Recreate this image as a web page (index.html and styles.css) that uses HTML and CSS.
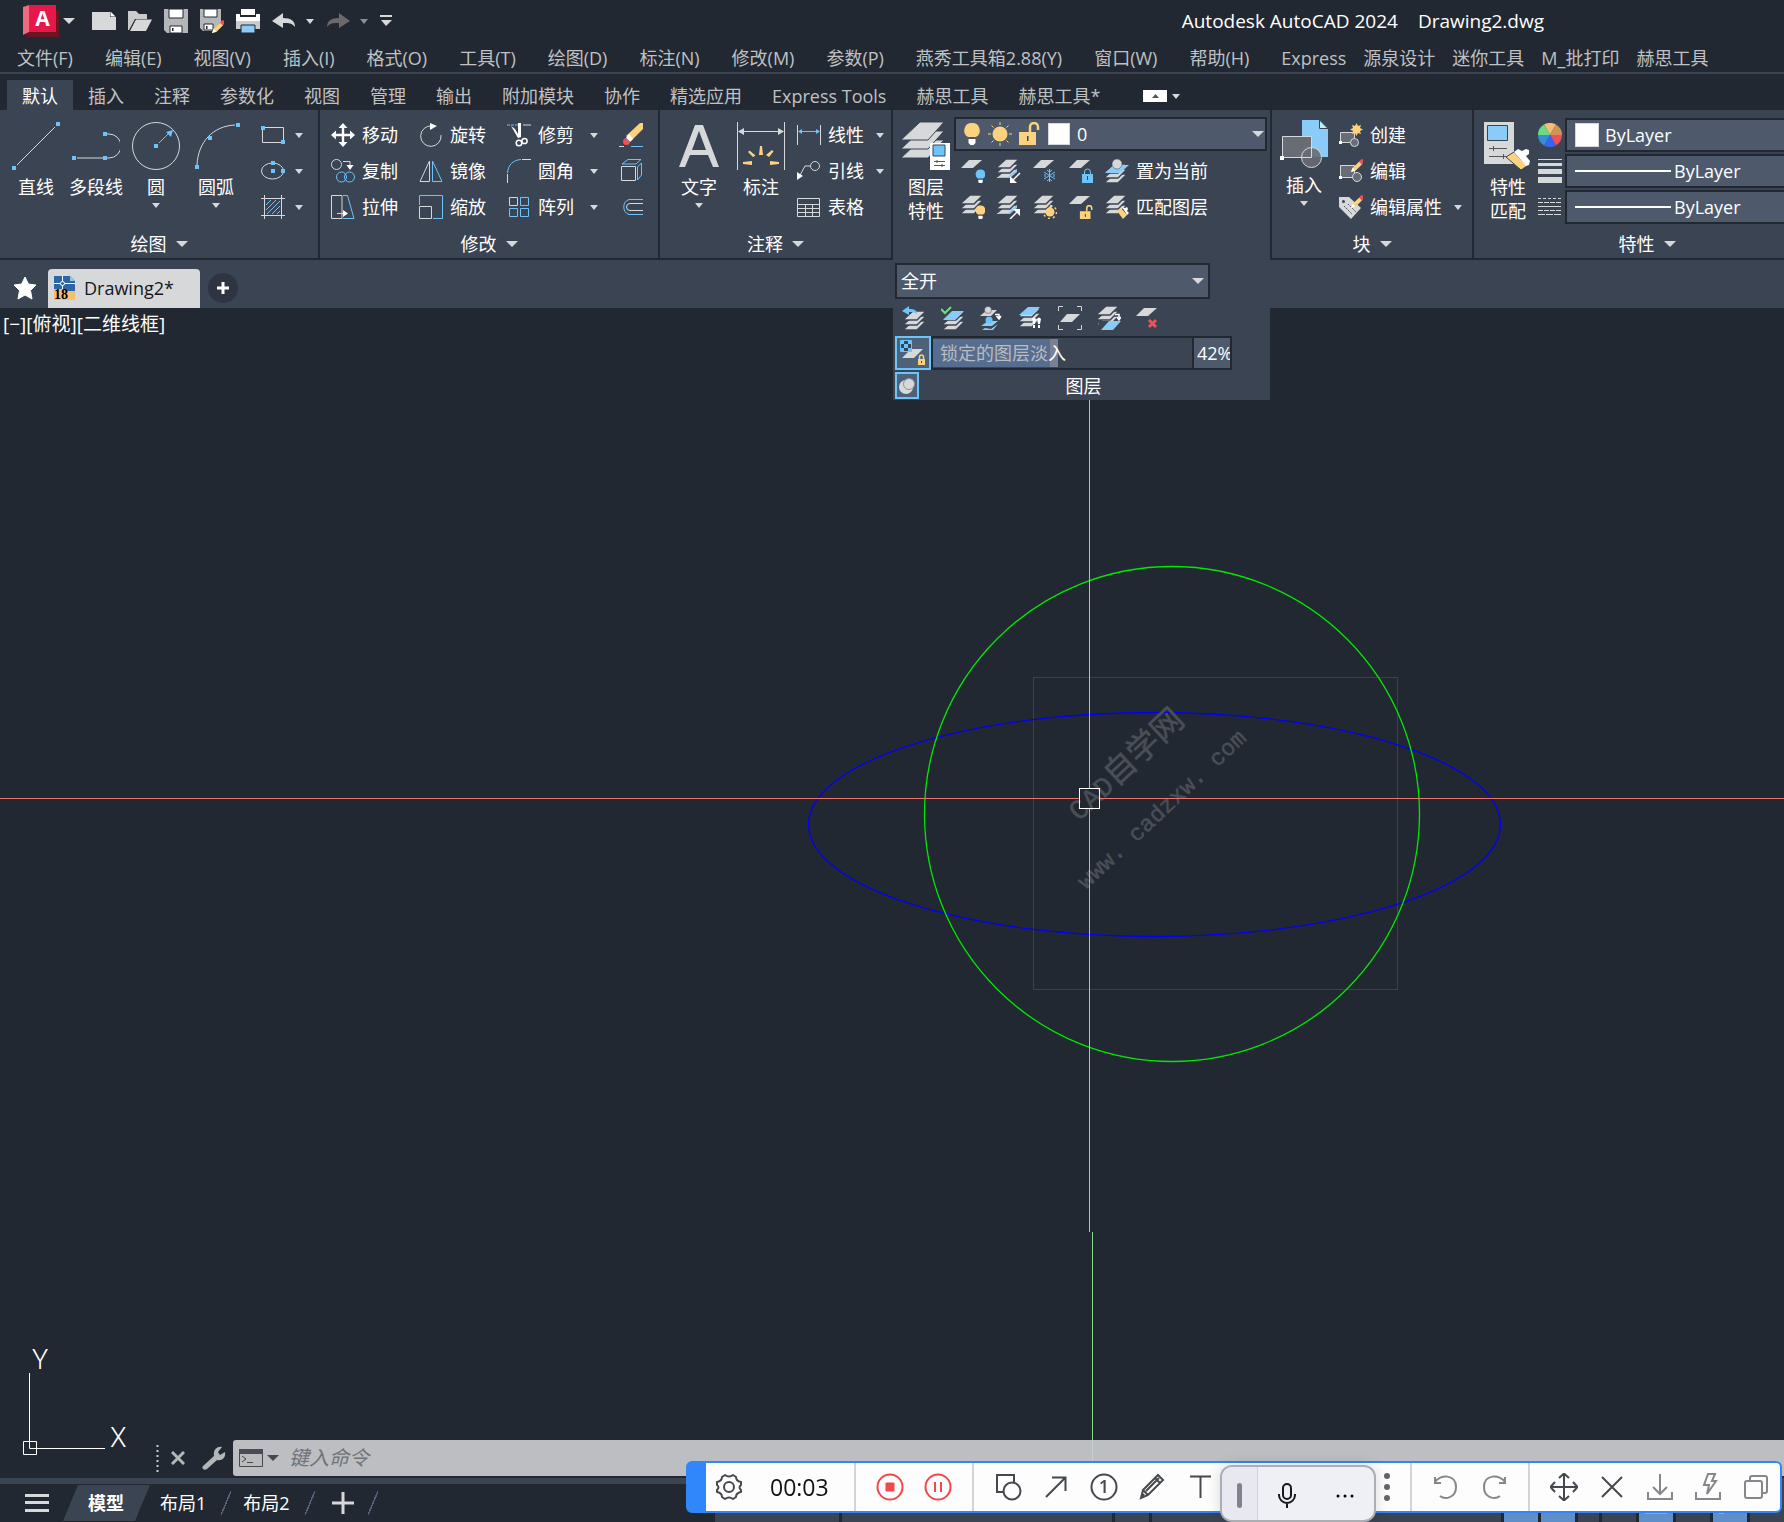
FILE: index.html
```html
<!DOCTYPE html>
<html lang="zh-CN">
<head>
  <meta charset="UTF-8">
  <title>Autodesk AutoCAD 2024 - Drawing2.dwg</title>
  <link rel="stylesheet" href="styles.css">
</head>
<body>

<!-- Shared icon shapes -->
<svg class="defs" width="0" height="0" aria-hidden="true">
  <symbol id="sheet" viewBox="0 0 24 24"><path d="M8 1h13l-9 8H0z"/></symbol>
  <symbol id="stack" viewBox="0 0 24 24">
    <g fill="#d6d8da" stroke="#3b4453" stroke-width="1.4">
      <path d="M9 10h13l-9 9H-1z"/><path d="M9 5h13l-9 9H-1z"/><path d="M9 0h13l-9 9H-1z"/>
    </g>
  </symbol>
  <symbol id="bulb" viewBox="0 0 24 24">
    <path d="M12 1a7.500 7.500 0 0 0-4 14h8a7.500 7.500 0 0 0-4-14z"/><path d="M8.500 17h7v4l-2 2h-3l-2-2z" fill="#fff"/>
  </symbol>
  <symbol id="lock" viewBox="0 0 24 24">
    <path d="M3 10h17v13H3z"/><path d="M14 10V5a4 4 0 0 1 8 0v3" fill="none" stroke="#fcd27e" stroke-width="2.500"/><path d="M11 14h1.500v5H11z" fill="#3b4453"/>
  </symbol>
  <symbol id="pencil" viewBox="0 0 12 12">
    <path d="M0 12l1.500-4L8 2l2.500 2.500L4 11z" fill="#fcd27e"/><path d="M0 12l1.500-4L4 10.500z" fill="#fff"/><path d="M7.500 2.500l1.500-2a1.800 1.800 0 0 1 2.500 2.500l-1.500 2z" fill="#f0505a"/>
  </symbol>
</svg>

<header class="titlebar">
  <button class="app-btn" aria-label="应用程序菜单">
    <svg width="36" height="32"><path d="M6 6h30v26H3z" fill="#6b1422"/><path d="M0 2l6-2v27l-6 3z" fill="#ee6a7c"/><path d="M6 0h27v27H6z" fill="#e6174b"/><text x="19.500" y="21" text-anchor="middle" class="logo-a">A</text></svg>
    <i class="caret big"></i>
  </button>
  <div class="quick">
    <button aria-label="新建"><svg width="24" height="24"><path d="M0 3h18v5h6v13H0z" fill="#d6d8da"/><path d="M18.500 2.500l5 5h-5z" fill="#fff"/></svg></button>
    <button aria-label="打开"><svg width="24" height="24"><path d="M0 2h8l3 3h8v5H7L1 21H0z" fill="#c9cbcd"/><path d="M8 10.500h16L18 22H2z" fill="#d6d8da"/></svg></button>
    <button aria-label="保存"><svg width="24" height="24"><path d="M0 0h24v24H3l-3-3z" fill="#b4b7b8"/><path d="M5 0h14v9H5zM6 17h12v7H6z" fill="#fff" stroke="#222831"/><path d="M8 19h1.500v3H8z" fill="#222831"/></svg></button>
    <button aria-label="另存为"><svg width="24" height="24"><path d="M0 0h21v13L12 22H3l-3-3z" fill="#b4b7b8"/><path d="M4 0h13v8H4zM4 15h9v6H4z" fill="#fff" stroke="#222831"/><path d="M6 17h1.500v3H6z" fill="#222831"/><use href="#pencil" x="12" y="11" width="13" height="13"/></svg></button>
    <button aria-label="打印"><svg width="24" height="24"><path d="M5 0h14v6H5z" fill="#fff"/><path d="M0 5h4v3h16V5h4v7H0z" fill="#fff"/><path d="M0 12h24v8H0z" fill="#c9cbcd"/><path d="M5 16h14v8H5z" fill="#8acbf7" stroke="#222831"/></svg></button>
    <button aria-label="放弃"><svg width="24" height="24"><path d="M0 12l11-8v5c8 0 12 3 12 9-3-4-6-4-12-4v5z" fill="#d6d8da"/></svg><i class="caret"></i></button>
    <button class="dim" aria-label="重做"><svg width="24" height="24"><path d="M24 12L13 4v5C5 9 1 12 1 18c3-4 6-4 12-4v5z" fill="#6d686b"/></svg><i class="caret"></i></button>
    <button aria-label="自定义"><svg width="12" height="12"><path d="M0 0h12v2H0zM1 5h11L6 11z" fill="#d6d8da"/></svg></button>
  </div>
  <div class="doc-title"><span>Autodesk AutoCAD 2024</span><span>Drawing2.dwg</span></div>
</header>

<nav class="menubar">
  <a href="#">文件(F)</a><a href="#">编辑(E)</a><a href="#">视图(V)</a><a href="#">插入(I)</a><a href="#">格式(O)</a><a href="#">工具(T)</a><a href="#">绘图(D)</a><a href="#">标注(N)</a><a href="#">修改(M)</a><a href="#">参数(P)</a><a href="#">燕秀工具箱2.88(Y)</a><a href="#">窗口(W)</a><a href="#">帮助(H)</a>
  <div class="plugins"><a href="#">Express</a><a href="#">源泉设计</a><a href="#">迷你工具</a><a href="#">M_批打印</a><a href="#">赫思工具</a></div>
</nav>

<nav class="ribbon-tabs">
  <a href="#" class="active">默认</a><a href="#">插入</a><a href="#">注释</a><a href="#">参数化</a><a href="#">视图</a><a href="#">管理</a><a href="#">输出</a><a href="#">附加模块</a><a href="#">协作</a><a href="#">精选应用</a><a href="#">Express Tools</a><a href="#">赫思工具</a><a href="#">赫思工具*</a>
  <button class="collapse" aria-label="最小化功能区"><svg width="24" height="12"><path d="M0 0h24v12H0z" fill="#fff"/><path d="M9 8h7l-3.500-4z" fill="#555"/></svg><i class="caret"></i></button>
</nav>

<div class="ribbon">
  <!-- Draw -->
  <section class="panel draw">
    <div class="tools">
      <button class="large"><svg width="48" height="48"><path d="M5 43L43 5" class="ln"/><path d="M0 44h4v4H0zM44 0h4v4h-4z" class="bl"/></svg><span>直线</span></button>
      <button class="large"><svg width="48" height="48"><path d="M5 36h27M33 12h4a12 12 0 0 1 0 24h-4" class="ln"/><path d="M0 34h4v4H0zM31 34h4v4h-4zM31 10h4v4h-4z" class="bl"/></svg><span>多段线</span></button>
      <button class="large"><svg width="48" height="48"><circle cx="24" cy="24" r="23.500" class="ln"/><path d="M27 21l9-9" class="lb"/><path d="M22 22h4v4h-4zM41 8l-2 7-5-5z" class="bl"/></svg><span>圆</span><i class="caret"></i></button>
      <button class="large"><svg width="48" height="48"><path d="M5 43C6 20 21 4 43 3" class="ln"/><path d="M3 43h4v4H3zM16 14h4v4h-4zM44 1h4v4h-4z" class="bl"/></svg><span>圆弧</span><i class="caret"></i></button>
      <div class="mini">
        <button aria-label="矩形"><svg width="24" height="24"><path d="M1.500 4.500h21v15h-21z" class="ln"/><path d="M0 3h4v4H0zM20 17h4v4h-4z" class="bl"/></svg><i class="caret"></i></button>
        <button aria-label="椭圆"><svg width="24" height="24"><ellipse cx="11.500" cy="12" rx="11" ry="8" class="ln"/><path d="M10 2h4v4h-4zM10 10h4v4h-4zM20 10h4v4h-4z" class="bl"/></svg><i class="caret"></i></button>
        <button aria-label="图案填充"><svg width="24" height="24"><path d="M0 3.500h24M0 20.500h24M3.500 0v24M20.500 0v24" class="ln"/><path d="M5 10l5-5M5 15L15 5M6 19L19 6M11 19l8-8M16 19l3-3" class="lb"/></svg><i class="caret"></i></button>
      </div>
    </div>
    <button class="panel-title">绘图<i class="caret big"></i></button>
  </section>

  <!-- Modify -->
  <section class="panel modify">
    <div class="tools">
      <div class="grid">
        <button><svg width="24" height="24"><path d="M12 0l4.500 5h-3.300v5.800H19V7.500l5 4.500-5 4.500v-3.300h-5.800V19h3.300L12 24l-4.500-5h3.300v-5.800H5v3.300L0 12l5-4.500v3.300h5.800V5H7.500z" fill="#fff"/></svg>移动</button>
        <button><svg width="24" height="24"><path d="M13 3a10.200 10.200 0 1 0 9 9" class="ln"/><path d="M11 0l7 3-7 4z" fill="#fff"/></svg>旋转</button>
        <button><svg width="24" height="24"><path d="M0 2h11" class="lb" stroke-dasharray="3 1"/><path d="M16 2h8" class="ln"/><path d="M4 3l4 3 3 5V0h3v14l-3 1z" fill="#fff"/><circle cx="12" cy="20" r="2.800" class="th"/><circle cx="17.500" cy="18" r="2.600" class="th"/></svg>修剪<i class="caret"></i></button>
        <button aria-label="删除"><svg width="24" height="24"><path d="M24 0v6L12 18l-5-5L21 0z" fill="#fcd27e"/><path d="M10 11l4 5-3 3-4-4z" fill="#fff"/><path d="M7 15l4 4a3.500 3.500 0 1 1-4-4z" fill="#f0505a"/><path d="M0 23.500h5" class="ln"/><path d="M12 23.500h12" class="lb"/></svg></button>
        <button><svg width="24" height="24"><circle cx="5.500" cy="5.500" r="5" class="ln"/><path d="M12 2.500h7V7" class="ln"/><path d="M15.500 6h7L19 11z" fill="#fff"/><circle cx="10.500" cy="18" r="5" class="lb"/><circle cx="18.500" cy="18" r="5" class="lb"/></svg>复制</button>
        <button><svg width="24" height="24"><path d="M10.500 2v20.500H1z" class="ln"/><path d="M13.500 2v20.500H23z" class="lb"/></svg>镜像</button>
        <button><svg width="24" height="24"><path d="M.5 15v9M15 .5h9" class="ln"/><path d="M.5 14C1 6 6 1 14 .5" class="lb"/></svg>圆角<i class="caret"></i></button>
        <button aria-label="分解"><svg width="24" height="24"><path d="M2.500 7.500h14v14h-14z" class="ln"/><path d="M3 5l6-4.500h13L17 5zM18.500 8l4-4v12l-4 5z" class="lb"/></svg></button>
        <button><svg width="24" height="24"><path d="M11 .5H.5v23H11V.5M6 18.500h8" class="ln"/><path d="M12 15l5 3.500-5 3.500z" fill="#fff"/><path d="M12 .5h4.500l6.500 23H12" class="lb"/></svg>拉伸</button>
        <button><svg width="24" height="24"><path d="M.5 11.500h12v12H.5z" class="ln"/><path d="M.5 10V.5h23v23H14" class="lb"/></svg>缩放</button>
        <button><svg width="24" height="24"><path d="M2.500 2.500h8v8h-8z" class="ln"/><path d="M13.500 2.500h8v8h-8zM2.500 13.500h8v8h-8zM13.500 13.500h8v8h-8z" class="lb"/></svg>阵列<i class="caret"></i></button>
        <button aria-label="偏移"><svg width="24" height="24"><path d="M24 4.500H10a8 8 0 0 0 0 15h14" class="lb"/><path d="M24 8.500H11a3.500 3.500 0 0 0 0 7h13" class="ln"/></svg></button>
      </div>
    </div>
    <button class="panel-title">修改<i class="caret big"></i></button>
  </section>

  <!-- Annotation -->
  <section class="panel annotate">
    <div class="tools">
      <button class="large"><svg width="48" height="48"><path d="M4 45L20 3h8l16 42h-6l-5-12H15l-5 12zM17 28h14L24 9z" fill="#d6d8da" fill-rule="evenodd"/></svg><span>文字</span><i class="caret"></i></button>
      <button class="large"><svg width="48" height="48"><path d="M.5 0v48M47.500 0v48M4 9.500h40" class="ln"/><path d="M1 9.500L7 6v7zM47 9.500L41 6v7z" fill="#d6d8da"/><path d="M22 33l1-9h2l1 9zM16 35l-5-5 1.500-1.500 6 5zM32 35l-3-2 6-5 1.500 1.500zM15 39v4l-9-1v-2zM33 39v4l9-1v-2z" fill="#fcd27e"/></svg><span>标注</span></button>
      <div class="mini">
        <button><svg width="24" height="24"><path d="M.5 2v20M23.500 2v20" class="ln"/><path d="M3 8.500h18" class="lb"/><path d="M1 8.500L5 6v5zM23 8.500L19 6v5z" class="bl"/></svg>线性<i class="caret"></i></button>
        <button><svg width="24" height="24"><circle cx="18" cy="7" r="4.500" class="ln"/><path d="M13 7H8L2 18" class="ln"/><path d="M0 21v-8l6 4z" fill="#fff"/></svg>引线<i class="caret"></i></button>
        <button><svg width="24" height="24"><path d="M.5 3.500h22v18H.5zM1 9.500h21M1 13.500h21M1 17.500h21M8.500 10v12M15.500 10v12" class="ln"/></svg>表格</button>
      </div>
    </div>
    <button class="panel-title">注释<i class="caret big"></i></button>
  </section>

  <!-- Layers -->
  <section class="panel layers">
    <div class="tools">
      <button class="large"><svg width="48" height="48"><g fill="#d6d8da" stroke="#3b4453"><path d="M18 18h24L26 36H-1z"/><path d="M18 9h24L26 27H-1z"/><path d="M18 0h24L26 18H-1z"/></g><path d="M28 21h20v27H28z" fill="#fff"/><path d="M31 23h12v11H31z" fill="#6cc4fb" stroke="#3b4453"/><path d="M32 39.500h11M32 43.500h11M35 38v3M40 42v3" stroke="#555"/></svg><span>图层<br>特性</span></button>
      <div class="layer-tools">
        <label class="combo layer-combo">
          <svg width="24" height="24" fill="#fcd27e"><use href="#bulb"/></svg>
          <svg width="24" height="24"><circle cx="12" cy="12" r="7.500" fill="#fcd27e"/><path d="M12 0v3M12 21v3M0 12h3M21 12h3M3.500 3.500l2 2M18.500 18.500l2 2M3.500 20.500l2-2M18.500 5.500l2-2" stroke="#fcd27e"/></svg>
          <svg width="24" height="24" fill="#fcd27e"><use href="#lock"/></svg>
          <i class="swatch"></i>
          <select aria-label="图层"><option>0</option></select><i class="caret big"></i>
        </label>
        <div class="icon-row">
          <button aria-label="关闭图层"><svg width="24" height="24"><use href="#sheet" fill="#d6d8da"/><use href="#bulb" x="12" y="10" width="15" height="15" fill="#6cc4fb"/></svg></button>
          <button aria-label="隔离"><svg width="24" height="24"><use href="#stack"/><path d="M0 18h11l9-8v3l-7 6H0z" fill="#8acbf7"/><path d="M23 14l-7 7" stroke="#fff" stroke-width="1.500"/><path d="M13 24v-7l7 7z" fill="#fff"/></svg></button>
          <button aria-label="冻结"><svg width="24" height="24"><use href="#sheet" fill="#d6d8da"/><path d="M16.500 10v13M11 13l11 7M11 20l11-7M14 11l2.500 2 2.500-2M14 22l2.500-2 2.500 2M12 15v3M21 15v3" class="lb"/></svg></button>
          <button aria-label="锁定"><svg width="24" height="24"><use href="#sheet" fill="#d6d8da"/><path d="M13 15h11v9H13z" class="bl"/><path d="M15.500 15v-2a3 3 0 0 1 6 0v2" class="lb"/><path d="M18 17h1v4h-1z" fill="#3b4453"/></svg></button>
          <button><svg width="24" height="24"><use href="#stack" y="5"/><path d="M9 6h15l-9 8H0z" fill="#8acbf7"/><circle cx="12" cy="5" r="5" fill="#d6d8da" stroke="#3b4453" stroke-width=".5"/></svg>置为当前</button>
        </div>
        <div class="icon-row">
          <button aria-label="打开所有图层"><svg width="24" height="24"><use href="#stack"/><use href="#bulb" x="12" y="10" width="15" height="15" fill="#fcd27e"/></svg></button>
          <button aria-label="取消隔离"><svg width="24" height="24"><use href="#stack"/><path d="M0 18h11l9-8v3l-7 6H0z" fill="#8acbf7"/><path d="M13 24l7-7" stroke="#fff" stroke-width="1.500"/><path d="M16 14h7v7z" fill="#fff"/></svg></button>
          <button aria-label="解冻"><svg width="24" height="24"><use href="#stack"/><circle cx="17" cy="17" r="4.500" fill="#fcd27e"/><circle cx="17" cy="17" r="6.500" fill="none" stroke="#fcd27e" stroke-width="1.500" stroke-dasharray="2 3"/></svg></button>
          <button aria-label="解锁"><svg width="24" height="24"><use href="#sheet" fill="#d6d8da"/><use href="#lock" x="9" y="10" width="15" height="15" fill="#fcd27e"/></svg></button>
          <button><svg width="24" height="24"><use href="#stack"/><path d="M12 16l4-3 6 7-4 4z" fill="#fcd27e"/><path d="M17 12l3 1 2-1 1 2-1 2 2 2-2 2z" fill="#fff"/></svg>匹配图层</button>
        </div>
      </div>
    </div>

    <!-- Expanded part of the panel, lies over the drawing -->
    <div class="flyout">
      <label class="combo state-combo"><select aria-label="图层状态"><option>全开</option></select><i class="caret big"></i></label>
      <div class="state-row">
        <button aria-label="上一个"><svg width="24" height="24"><use href="#stack" x="2" y="5"/><path d="M0 5l7-5v3c5 0 8 1 8 5-3-2-5-2-8-2v3z" class="bl"/></svg></button>
        <button aria-label="漫游"><svg width="24" height="24"><use href="#stack" x="2" y="5"/><path d="M11 5h12l-9 9H2z" fill="#8acbf7"/><path d="M0 3l4 4 6-6" fill="none" stroke="#6be07b" stroke-width="2"/></svg></button>
        <button aria-label="更改到当前图层"><svg width="24" height="24"><path d="M7 4h10l-6 6H0z" fill="#d6d8da"/><circle cx="8" cy="4" r="3.500" fill="#d6d8da" stroke="#3b4453" stroke-width=".5"/><path d="M8 15h10l-6 5H1zM5 22l6 1 7-5-5 6H2z" fill="#8acbf7"/><circle cx="9" cy="14" r="3.500" class="bl"/><path d="M15 8.500h4V13M16.500 10l2.500 3 2-3" class="th"/></svg></button>
        <button aria-label="图层浏览"><svg width="24" height="24"><use href="#stack" y="2"/><path d="M9 1h12l-8 8H0z" fill="#8acbf7"/><path d="M13 13q2-3 4 0l-1 5h-2zM18 13q2-3 4 0l-1 5h-2zM14 19h2v3h-2zM19 19h2v3h-2z" fill="#fff"/></svg></button>
        <button aria-label="视口冻结"><svg width="24" height="24"><path d="M9 8h13l-8 8H2z" fill="#d6d8da"/><path d="M.5 5V.5H5M19 .5h4.500V5M.5 19v4.500H5M19 23.500h4.500V19" class="ln"/></svg></button>
        <button aria-label="合并"><svg width="24" height="24"><use href="#stack" y="0"/><path d="M2 15h22v9H2z" fill="#3b4453"/><path d="M12 15h12l-8 9H4z" fill="#8acbf7"/><path d="M18 8.500h4V13M20 11l2 3 2-3" class="th"/></svg></button>
        <button aria-label="删除图层"><svg width="24" height="24"><use href="#sheet" y="1" fill="#d6d8da"/><path d="M13 14l7 7M20 14l-7 7" stroke="#f0505a" stroke-width="3"/></svg></button>
      </div>
      <div class="fade-row">
        <button class="toggle" aria-label="锁定的图层淡入"><svg width="26" height="26"><path d="M11 9h12l-9 9H2z" fill="#d6d8da"/><path d="M.5.5h11v11H.5z" fill="#3b4453" stroke="#6cc4fb"/><path d="M1 1h3v3H1zM8 1h3v3H8zM4 4h4v4H4zM1 8h3v3H1zM8 8h3v3H8z" class="bl"/><path d="M18 19h7v6h-7z" fill="#fcd27e"/><path d="M19.500 19v-2a2 2 0 0 1 4 0v2" fill="none" stroke="#fcd27e" stroke-width="1.500"/><path d="M21 21h1v2h-1z" fill="#3b4453"/></svg></button>
        <div class="fade-slider"><input id="fade" type="range" min="0" max="90" value="42"><label for="fade">锁定的图层淡<b>入</b></label></div>
        <input class="fade-value" type="text" value="42%" aria-label="淡入百分比">
      </div>
      <div class="flyout-foot">
        <button class="toggle pin" aria-label="固定"><svg width="16" height="18"><circle cx="7" cy="10" r="7" fill="#d6d8da"/><circle cx="10" cy="7" r="5.500" fill="#d6d8da" stroke="#8b929c"/></svg></button>
        <span>图层</span>
      </div>
    </div>
  </section>

  <!-- Block -->
  <section class="panel block">
    <div class="tools">
      <button class="large"><svg width="48" height="48"><path d="M22 0h17l9 9v28H22z" fill="#8acbf7"/><path d="M39.500 0v8.500H48z" fill="#b9f0f0" stroke="#3b4453"/><path d="M2.500 16.500h29v21h-29z" fill="#696c74" stroke="#d6d8da"/><circle cx="31.500" cy="37.500" r="10" fill="#696c74" fill-opacity=".9" stroke="#d6d8da"/><path d="M21 37.500h10.500V27" class="ln"/><path d="M0 36h4v4H0z" fill="#fff"/></svg><span>插入</span><i class="caret"></i></button>
      <div class="mini">
        <button><svg width="24" height="24"><path d="M1.500 9.500h14v10h-14z" fill="#696c74" stroke="#d6d8da"/><circle cx="15.500" cy="19.500" r="4" fill="#696c74" stroke="#d6d8da"/><path d="M0 18h3v3H0z" fill="#fff"/><path d="M17.500 0l1.500 3 3-1-1 3 3 1.500-3 1.500 1 3-3-1-1.500 3-1.500-3-3 1 1-3-3-1.500 3-1.500-1-3 3 1z" fill="#fcd27e"/></svg>创建</button>
        <button><svg width="24" height="24"><path d="M1.500 6.500h14v12h-14z" fill="#696c74" stroke="#d6d8da"/><circle cx="18" cy="18" r="4.500" fill="#696c74" stroke="#d6d8da"/><path d="M0 17h3v3H0z" fill="#fff"/><use href="#pencil" x="12" y="0" width="13" height="13"/></svg>编辑</button>
        <button><svg width="24" height="24"><path d="M0 2h10l12 11-10 11L0 12z" fill="#d6d8da"/><path d="M5 11l8 8M9 9l8 8" stroke="#555" stroke-dasharray="2 1"/><circle cx="4.500" cy="6.500" r="1.500" fill="#3b4453"/><use href="#pencil" x="12" y="0" width="13" height="13"/></svg>编辑属性<i class="caret"></i></button>
      </div>
    </div>
    <button class="panel-title">块<i class="caret big"></i></button>
  </section>

  <!-- Properties -->
  <section class="panel props">
    <div class="tools">
      <button class="large"><svg width="48" height="48"><path d="M0 0h30v42H0z" fill="#d6d8da"/><path d="M3.500 3.500h20v15h-20z" fill="#8acbf7" stroke="#3b4453"/><path d="M5 26.500h18M5 34.500h18M9.500 24v5M19.500 32v5" stroke="#555"/><path d="M22 35l8-5 13 14-6 4z" fill="#fcd27e" stroke="#3b4453"/><path d="M30 30l4-3 4 2 4-2 3 1v4l-3 2 4 5-1 4-3 1z" fill="#fff"/></svg><span>特性<br>匹配</span></button>
      <div class="prop-rows">
        <div class="prop"><svg width="24" height="24"><g transform="translate(12 12)"><path d="M0 0L-6 -10.400A12 12 0 0 1 6 -10.400z" fill="#f5bd75"/><path d="M0 0L6 -10.400A12 12 0 0 1 12 0z" fill="#d2925a"/><path d="M0 0H12A12 12 0 0 1 6 10.400z" fill="#f0505a"/><path d="M0 0L6 10.400A12 12 0 0 1 -6 10.400z" fill="#3a64ee"/><path d="M0 0L-6 10.400A12 12 0 0 1 -12 0z" fill="#3590dc"/><path d="M0 0H-12A12 12 0 0 1 -6 -10.400z" fill="#6bdc82"/></g></svg>
          <label class="combo"><i class="swatch"></i><select aria-label="颜色"><option>ByLayer</option></select></label></div>
        <div class="prop"><svg width="24" height="24"><path d="M0 0h24v1H0zM0 4h24v3H0zM0 10h24v5H0zM0 18h24v6H0z" fill="#d6d8da"/></svg>
          <label class="combo"><i class="rule"></i><select aria-label="线宽"><option>ByLayer</option></select></label></div>
        <div class="prop"><svg width="24" height="24"><path d="M0 3.500h23" class="ln" stroke-dasharray="3 2"/><path d="M0 7.500h23M0 15.500h23" class="ln" stroke-dasharray="5 1"/><path d="M0 11.500h23" class="ln"/><path d="M0 19.500h23" class="ln" stroke-dasharray="7 1"/></svg>
          <label class="combo"><i class="rule"></i><select aria-label="线型"><option>ByLayer</option></select></label></div>
      </div>
    </div>
    <button class="panel-title">特性<i class="caret big"></i></button>
  </section>
</div>

<div class="file-tabs">
  <button aria-label="开始"><svg width="24" height="24"><path d="M12 1l3.400 7 7.600 1-5.500 5.500L19 23l-7-4-7 4 1.500-8.500L1 9l7.600-1z" fill="#fff" stroke="#fff" stroke-linejoin="round"/></svg></button>
  <a href="#" class="file-tab"><svg width="22" height="24"><path d="M0 0h16l5 5v19H0z" fill="#2c66a8"/><path d="M16 0l5 5h-5z" fill="#9cc7d0"/><path d="M0 13h8l5 2h8v9H0z" fill="#f6bf70"/><path d="M0 7.500h21M8.500 0v13" stroke="#fff"/><circle cx="8.500" cy="7.500" r="2" fill="#2c66a8" stroke="#fff"/><text x="0" y="23" class="badge">18</text></svg>Drawing2*</a>
  <button class="new-tab" aria-label="新图形"><svg width="12" height="12"><path d="M6 0v12M0 6h12" stroke="#fff" stroke-width="3"/></svg></button>
</div>

<main class="canvas">
  <div class="view-label">[−][俯视][二维线框]</div>
  <svg class="drawing">
    <rect x="1033.500" y="369.500" width="364" height="312" stroke="#cc0408"/>
    <ellipse cx="1154.500" cy="516.500" rx="346" ry="112" stroke="#0000f8" stroke-width="1.300"/>
    <circle cx="1172" cy="506" r="247.500" stroke="#00e800" stroke-width="1.300"/>
    <g class="watermark">
      <text transform="translate(1079 514) rotate(-43)"><tspan class="wm-latin">CAD</tspan>自学网</text>
      <text transform="translate(1086 582) rotate(-43)" class="wm-url">www. cadzxw. com</text>
    </g>
    <path d="M0 490.500h1079M1100 490.500h3000" stroke="#ec7468"/>
    <path d="M1089.500 92v388M1089.500 501v423M1092.500 924v236" stroke="#86de8a"/>
    <rect x="1079.500" y="480.500" width="20" height="20" stroke="#fff"/>
    <g stroke="#fff"><path d="M29.500 1065v75.500H105M23.500 1133.500h13v13h-13z"/></g>
    <text x="32" y="1061" class="ucs">Y</text><text x="110" y="1139" class="ucs">X</text>
  </svg>
  <div class="command">
    <div class="command-tools">
      <svg width="3" height="27"><path d="M1.500 0v27" stroke="#c9cbcd" stroke-width="2" stroke-dasharray="2 3"/></svg>
      <button aria-label="关闭"><svg width="14" height="14"><path d="M1 1l12 12M13 1L1 13" stroke="#b4b7b8" stroke-width="3"/></svg></button>
      <button aria-label="自定义"><svg width="24" height="24"><path d="M1 20L12 10C11 4 15 0 20 1l-4 5 2 3 5-3c1 6-3 9-8 8L5 23c-3 2-6-1-4-3z" fill="#b4b7b8"/></svg></button>
    </div>
    <div class="command-line">
      <svg width="24" height="18"><path d="M.5.5h23v17H.5z" fill="#b8bcbc" stroke="#4a474c"/><path d="M0 0h24v5H0z" fill="#4a4b58"/><path d="M3 7l4 3-4 3M8 13.500h6" fill="none" stroke="#4a474c"/></svg>
      <i class="caret big dark"></i>
      <input type="text" placeholder="键入命令" aria-label="命令行">
    </div>
  </div>
</main>

<footer class="status">
  <button class="burger" aria-label="布局菜单"><svg width="24" height="18"><path d="M0 0h24v3H0zM0 7h24v3H0zM0 15h24v3H0z" fill="#d6d8da"/></svg></button>
  <a href="#" class="layout active">模型</a>
  <a href="#" class="layout">布局1</a><i class="slash"></i>
  <a href="#" class="layout">布局2</a><i class="slash"></i>
  <button class="add" aria-label="新建布局"><svg width="22" height="22"><path d="M11 0v22M0 11h22" stroke="#d6d8da" stroke-width="3"/></svg></button><i class="slash"></i>
  <div class="status-cells">
    <i class="coords"></i>
    <i class="space"></i>
    <i><svg width="26" height="24"><path d="M0 19.500h8M12 19.500h14M5 4v14" class="th"/></svg></i>
    <i class="modes"><svg width="26" height="24"><path d="M6.500 2v20M12.500 2v20M18.500 2v20" class="th"/></svg></i>
    <i class="on"><svg width="26" height="24"><path d="M2 19.500h22L14 4" class="th"/></svg></i>
    <i class="on"><svg width="26" height="24"><path d="M3.500 3.500h19v17h-19z" class="th"/></svg></i>
    <i class="narrow"></i>
    <i><svg width="26" height="24"><path d="M7 6h12v12H7z" fill="#d6d8da"/></svg></i>
    <i class="on"><svg width="26" height="24"><path d="M2.500 4.500h21v17h-21z" class="th"/><path d="M8 14h4v5H8zM15 14h4v5h-4z" fill="#fff"/></svg></i>
    <i><svg width="26" height="24"><path d="M11 8h14v14H11z" fill="#6bdc82"/></svg></i>
    <i class="on"><svg width="26" height="24"><path d="M2.500 4.500h4v17h-4zM8 19h11v-8" class="th"/></svg></i>
    <i></i>
  </div>
</footer>

<!-- Screen recorder bar -->
<div class="recorder">
  <div class="handle"></div>
  <div class="rec-group first">
    <button aria-label="设置"><svg width="28" height="28" class="dk"><path d="M10 2q4 3 8 0l3 2q0 4 5 5v3q-3 2 0 5v2q-5 1-5 5l-3 2q-4-3-8 0l-3-2q0-4-5-5v-2q3-3 0-5V9q5-1 5-5z" stroke-linejoin="round"/><circle cx="14" cy="14" r="5"/></svg></button>
    <time>00:03</time>
  </div>
  <div class="rec-group">
    <button aria-label="停止"><svg width="28" height="28"><circle cx="14" cy="14" r="12.500" class="rd"/><rect x="9.500" y="9.500" width="9" height="9" rx="1" fill="#f2474b"/></svg></button>
    <button aria-label="暂停"><svg width="28" height="28"><circle cx="14" cy="14" r="12.500" class="rd"/><path d="M11 9v10M17 9v10" class="rd"/></svg></button>
  </div>
  <div class="rec-group wide">
    <button aria-label="形状"><svg width="28" height="28" class="dk"><path d="M10 19H3V2h17v7"/><circle cx="18" cy="18" r="8.500"/></svg></button>
    <button aria-label="箭头"><svg width="28" height="28" class="dk"><path d="M4 24L23 5M10 4.500h13.500V18"/></svg></button>
    <button aria-label="序号"><svg width="28" height="28" class="dk"><circle cx="14" cy="14" r="12.500"/><text x="14" y="20" text-anchor="middle" class="num">1</text></svg></button>
    <button aria-label="画笔"><svg width="28" height="28" class="dk"><path d="M3 25l2-8L20 2l5 5-15 15zM5 17l5 5M8 18L21 5M17 5l5 5M3 25l3-4"/></svg></button>
    <button aria-label="文本"><svg width="28" height="28" class="dk"><path d="M4 3.500h21M14.500 3v22"/></svg></button>
    <button class="more" aria-label="更多"><svg width="6" height="30"><g fill="#63656b"><circle cx="3" cy="4" r="3"/><circle cx="3" cy="15" r="3"/><circle cx="3" cy="26" r="3"/></g></svg></button>
  </div>
  <div class="rec-group">
    <button aria-label="撤销"><svg width="28" height="28" class="gy"><path d="M3 4v6h6M3 9c5-8 21-8 21 5 0 11-11 13-16 9"/></svg></button>
    <button aria-label="恢复"><svg width="28" height="28" class="gy"><path d="M25 4v6h-6M25 9C20 1 4 1 4 14c0 11 11 13 16 9"/></svg></button>
  </div>
  <div class="rec-group last">
    <button aria-label="移动"><svg width="28" height="28" class="dk"><path d="M14 1v26M1 14h26M9 5l5-4.500L19 5M9 23l5 4.500 5-4.500M5 9L.5 14 5 19M23 9l4.500 5-4.500 5"/></svg></button>
    <button aria-label="关闭"><svg width="28" height="28" class="dk"><path d="M4 4l20 20M24 4L4 24"/></svg></button>
    <button aria-label="下载"><svg width="28" height="28" class="gy"><path d="M14 1v20M7 14l7 7 7-7M2 19v7h24v-7"/></svg></button>
    <button aria-label="快速保存"><svg width="28" height="28" class="gy"><path d="M14 1h7l-3 7h4L13 21l2-9h-5zM2 19v7h24v-7"/></svg></button>
    <button aria-label="复制"><svg width="28" height="28" class="gy"><rect x="3" y="8" width="17" height="17" rx="2"/><path d="M8 8V5q0-2 2-2h13q2 0 2 2v13q0 2-2 2h-3"/></svg></button>
  </div>
  <div class="voice">
    <div class="grip"><i></i></div>
    <button aria-label="语音"><svg width="18" height="26" class="bk"><rect x="5" y="1" width="8" height="15" rx="4"/><path d="M1 11v1a8 8 0 0 0 16 0v-1M9 20v5"/></svg></button>
    <button aria-label="更多选项"><svg width="18" height="4"><circle cx="2" cy="2" r="1.500"/><circle cx="9" cy="2" r="1.500"/><circle cx="16" cy="2" r="1.500"/></svg></button>
  </div>
</div>

</body>
</html>
```
FILE: styles.css
```css
* {
  box-sizing: border-box;
}

body {
  margin: 0;
  height: 100vh;
  display: flex;
  flex-direction: column;
  overflow: hidden;
  background: #222831;
  color: #fff;
  font: 18px/24px "Open Sans", "Noto Sans CJK SC", sans-serif;
}

a {
  color: inherit;
  text-decoration: none;
}

button {
  display: flex;
  align-items: center;
  padding: 0;
  border: 0;
  background: none;
  color: inherit;
  font: inherit;
  white-space: nowrap;
}

svg {
  display: block;
  flex: none;
}

.defs {
  position: absolute;
}

.caret {
  flex: none;
  border: 4px solid transparent;
  border-top: 5px solid #d6d8da;
  border-bottom: 0;
}

.caret.big {
  border-width: 6px;
  border-bottom: 0;
}

.caret.dark {
  border-top-color: #4a474c;
}

/* icon strokes */
.ln { fill: none; stroke: #d6d8da; }
.lb { fill: none; stroke: #6cc4fb; }
.bl { fill: #6cc4fb; }
.th { fill: none; stroke: #fff; stroke-width: 1.5; }
.dk { fill: none; stroke: #46484f; stroke-width: 2; }
.gy { fill: none; stroke: #85878a; stroke-width: 2; }
.rd { fill: none; stroke: #f2474b; stroke-width: 2; }
.bk { fill: none; stroke: #17181c; stroke-width: 2; }

.logo-a {
  fill: #fff;
  font-size: 21px;
  font-weight: bold;
}

/* Title bar */
.titlebar {
  flex: none;
  display: flex;
  align-items: center;
  height: 44px;
  padding: 0 0 2px 23px;
}

.app-btn {
  gap: 4px;
  margin-right: 17px;
}

.quick {
  display: flex;
  align-items: center;
  gap: 12px;
}

.quick button {
  gap: 10px;
}

.dim .caret {
  border-top-color: #8b8d90;
}

.doc-title {
  display: flex;
  gap: 20px;
  margin-left: auto;
  padding-right: 240px;
  font-size: 19px;
}

/* Menus */
.menubar {
  flex: none;
  display: flex;
  align-items: center;
  gap: 32px;
  height: 30px;
  padding: 0 17px;
  border-bottom: 2px solid #3b4453;
  color: #bfc1c4;
  white-space: nowrap;
}

.plugins {
  display: flex;
  gap: 17px;
}

.ribbon-tabs {
  flex: none;
  display: flex;
  align-items: flex-end;
  height: 36px;
  padding-left: 7px;
  color: #bfc1c4;
  white-space: nowrap;
}

.ribbon-tabs a {
  padding: 4px 15px 2px;
}

.ribbon-tabs .active {
  background: #3b4453;
  color: #fff;
}

.collapse {
  gap: 5px;
  height: 28px;
  margin-left: 28px;
}

/* Ribbon */
.ribbon {
  flex: none;
  display: flex;
  height: 150px;
  background: #3b4453;
  border-bottom: 2px solid #222831;
}

.panel {
  flex: none;
  display: flex;
  flex-direction: column;
  justify-content: space-between;
  border-right: 2px solid #222831;
}

.draw { width: 320px; }
.modify { width: 340px; }
.annotate { width: 233px; }
.layers { width: 379px; position: relative; }
.block { width: 202px; }
.props { width: 348px; }

.tools {
  display: flex;
  padding: 7px 0 0 6px;
}

.large {
  flex-direction: column;
  width: 60px;
  padding-top: 5px;
}

.large span {
  margin-top: 5px;
}

.large .caret {
  margin-top: 4px;
}

.mini button {
  gap: 7px;
  height: 36px;
}

.mini .caret {
  margin-left: 5px;
}

.draw .mini {
  padding-left: 15px;
}

.draw .mini .caret {
  margin-left: 3px;
}

.grid {
  display: grid;
  grid-template-columns: 88px 88px 112px 24px;
  grid-auto-rows: 36px;
  padding-left: 5px;
}

.grid button {
  gap: 7px;
}

.grid .caret {
  margin-left: 9px;
}

.annotate .tools {
  padding-left: 8px;
}

.annotate .mini {
  padding-left: 5px;
}

.annotate .large {
  width: 62px;
}

.panel-title {
  justify-content: center;
  gap: 9px;
  height: 28px;
}

.combo {
  display: flex;
  align-items: center;
  height: 34px;
  border: 2px solid #222831;
  background: #4e5a6c;
}

.combo select {
  flex: 1;
  min-width: 0;
  padding: 0;
  border: 0;
  background: none;
  color: #fff;
  font: inherit;
  appearance: none;
}

.swatch {
  flex: none;
  width: 22px;
  height: 22px;
  border: 1px solid #d6d8da;
  background: #fff;
}

.layer-combo {
  gap: 4px;
  width: 313px;
  margin: 0 0 2px 1px;
  padding: 0 1px 0 4px;
}

.layer-combo .swatch {
  margin: 0 3px 0 4px;
}

.icon-row {
  display: flex;
  align-items: center;
  gap: 12px;
  height: 36px;
  padding-left: 8px;
}

.icon-row button {
  gap: 7px;
}

.layers .large {
  width: 54px;
}

.flyout {
  position: absolute;
  top: 148px;
  left: 0;
  z-index: 2;
  width: 377px;
  padding: 5px 2px 0;
  background: #3b4453;
}

.state-combo {
  width: 315px;
  height: 36px;
  padding: 0 4px;
}

.state-row {
  display: flex;
  gap: 15px;
  align-items: flex-start;
  height: 37px;
  padding: 7px 7px 0;
}

.fade-row {
  display: flex;
  height: 34px;
}

.toggle {
  justify-content: center;
  width: 36px;
  border: 2px solid #6cc4fb;
  background: #4d6178;
}

.pin {
  width: 24px;
  height: 27px;
}

.fade-slider {
  position: relative;
  width: 263px;
  border: 2px solid #222831;
}

.fade-slider input {
  display: block;
  width: 100%;
  height: 28px;
  margin: 1px 0;
  appearance: none;
  background: linear-gradient(to right, #576d8f 45%, transparent 45%);
}

.fade-slider input::-webkit-slider-thumb {
  appearance: none;
  width: 8px;
  height: 28px;
  background: #7b8194;
}

.fade-slider label {
  position: absolute;
  left: 7px;
  top: 3px;
  color: #b9bcc0;
  white-space: nowrap;
}

.fade-slider b {
  color: #fff;
  font-weight: normal;
}

.fade-value {
  width: 38px;
  padding: 0 0 0 3px;
  border: 2px solid #222831;
  border-left: 0;
  background: #4e5a6c;
  color: #fff;
  font: inherit;
}

.flyout-foot {
  display: flex;
  padding-top: 2px;
}

.flyout-foot span {
  flex: 1;
  padding-right: 20px;
  line-height: 28px;
  text-align: center;
}

.prop-rows {
  flex: 1;
}

.prop {
  display: flex;
  align-items: center;
  gap: 3px;
  height: 36px;
  padding-left: 2px;
}

.props .large {
  flex: none;
  width: 56px;
}

.block .tools {
  padding-left: 2px;
}

.block .large {
  padding-top: 3px;
}

.block .mini {
  padding-left: 5px;
}

.prop .combo {
  flex: 1;
  gap: 6px;
  padding-left: 8px;
}

.prop .swatch {
  width: 24px;
  height: 24px;
}

.rule {
  flex: none;
  width: 96px;
  height: 2px;
  margin-right: -3px;
  background: #fff;
}

/* File tabs */
.file-tabs {
  flex: none;
  display: flex;
  align-items: center;
  height: 48px;
  padding: 8px 0 0 13px;
  background: #3b4453;
}

.file-tab {
  display: flex;
  align-items: center;
  align-self: flex-end;
  gap: 8px;
  width: 152px;
  height: 39px;
  margin: 0 8px 0 11px;
  padding: 0 0 2px 6px;
  border-radius: 4px 4px 0 0;
  background: #d6d8da;
  color: #14161c;
}

.badge {
  font: bold 14px/14px "Liberation Serif", serif;
}

.new-tab {
  justify-content: center;
  width: 30px;
  height: 30px;
  border-radius: 50%;
  background: #2e3442;
}

/* Drawing area */
.canvas {
  flex: 1;
  position: relative;
  display: flex;
  flex-direction: column;
  justify-content: space-between;
  min-height: 0;
}

.view-label {
  padding: 4px 3px;
  font-size: 19px;
}

.drawing {
  position: absolute;
  top: 0;
  left: 0;
  width: 100%;
  height: 100%;
  fill: none;
}

.watermark {
  fill: #4a4e57;
  stroke: #4a4e57;
  stroke-width: 0.5;
  font-size: 32px;
}

.wm-latin {
  font-family: "Liberation Mono", monospace;
  font-size: 28px;
}

.wm-url {
  font-family: "Liberation Mono", monospace;
  font-size: 23px;
}

.ucs {
  fill: #fff;
  font: 300 27px Roboto, sans-serif;
}

.command {
  position: relative;
  display: flex;
  height: 38px;
  margin-left: 146px;
  padding-bottom: 2px;
}

.command-tools {
  display: flex;
  align-items: center;
  gap: 12px;
  width: 87px;
  padding-left: 10px;
}

.command-tools button:last-child {
  margin-left: 5px;
}

.command-line {
  flex: 1;
  display: flex;
  align-items: center;
  gap: 4px;
  padding-left: 6px;
  border-radius: 3px 0 0 3px;
  background: rgba(205, 206, 209, 0.9);
}

.command-line input {
  flex: 1;
  margin-left: 4px;
  border: 0;
  outline: 0;
  background: none;
  font: italic 20px/24px "Open Sans", "Noto Sans CJK SC", sans-serif;
}

.command-line input::placeholder {
  color: #6f7278;
}

/* Layout tabs and status */
.status {
  flex: none;
  display: flex;
  align-items: center;
  height: 44px;
  border-top: 6px solid #3b4453;
  padding-left: 25px;
}

.layout {
  padding: 6px 15px 6px 12px;
}

.layout.active {
  width: 87px;
  margin: 0 -2px 0 14px;
  padding: 6px 25px;
  background: #3b4453;
  clip-path: polygon(15px 0, 100% 0, 72px 100%, 0 100%);
  font-weight: bold;
}

.slash {
  width: 10px;
  height: 24px;
  background: linear-gradient(to bottom right, transparent 46%, #56607a 46%, #56607a 54%, transparent 54%);
}

.add {
  margin: 0 14px 0 17px;
}

.status-cells {
  flex: 1;
  align-self: stretch;
  display: flex;
  gap: 3px;
  margin-left: 337px;
}

.status-cells i {
  display: flex;
  justify-content: center;
  align-items: center;
  width: 34px;
  background: #3b4453;
}

.status-cells .on { background: #5f8fc8; }
.status-cells .coords { width: 124px; }
.status-cells .space { width: 270px; }
.status-cells .narrow { width: 21px; }
.status-cells .modes { flex: 1; justify-content: flex-start; }

/* Recorder */
.recorder {
  position: fixed;
  left: 686px;
  right: 2px;
  bottom: 9px;
  z-index: 5;
  display: flex;
  height: 52px;
  border: 2px solid #2f87fb;
  border-radius: 6px;
  background: #fdfdfd;
  color: #111;
}

.handle {
  width: 18px;
  background: #2f87fb;
}

.rec-group {
  display: flex;
  align-items: center;
  gap: 20px;
  padding: 0 20px;
  border-right: 2px solid #d4d5d8;
}

.rec-group.first {
  gap: 27px;
  width: 150px;
  padding: 0 0 0 9px;
  font-size: 23px;
}

.rec-group.wide {
  flex: 1;
}

.more {
  margin-left: auto;
}

.rec-group.last {
  border: 0;
  padding-right: 10px;
}

.num {
  fill: #46484f;
  stroke: none;
  font-size: 18px;
  font-weight: 600;
}

.voice {
  position: absolute;
  left: 532px;
  top: 2px;
  display: flex;
  width: 156px;
  height: 57px;
  overflow: hidden;
  border: 2px solid #acaeb4;
  border-radius: 12px;
  background: #eff0f5;
  box-shadow: 0 0 14px rgba(0, 0, 0, 0.15);
}

.voice button {
  flex: 1;
  justify-content: center;
  padding-top: 4px;
}

.grip {
  display: flex;
  justify-content: center;
  width: 36px;
  padding-top: 16px;
  border-right: 1px solid #d2d3da;
  background: #e8e9f0;
}

.grip i {
  width: 5px;
  height: 25px;
  border-radius: 3px;
  background: #80838e;
}
```
